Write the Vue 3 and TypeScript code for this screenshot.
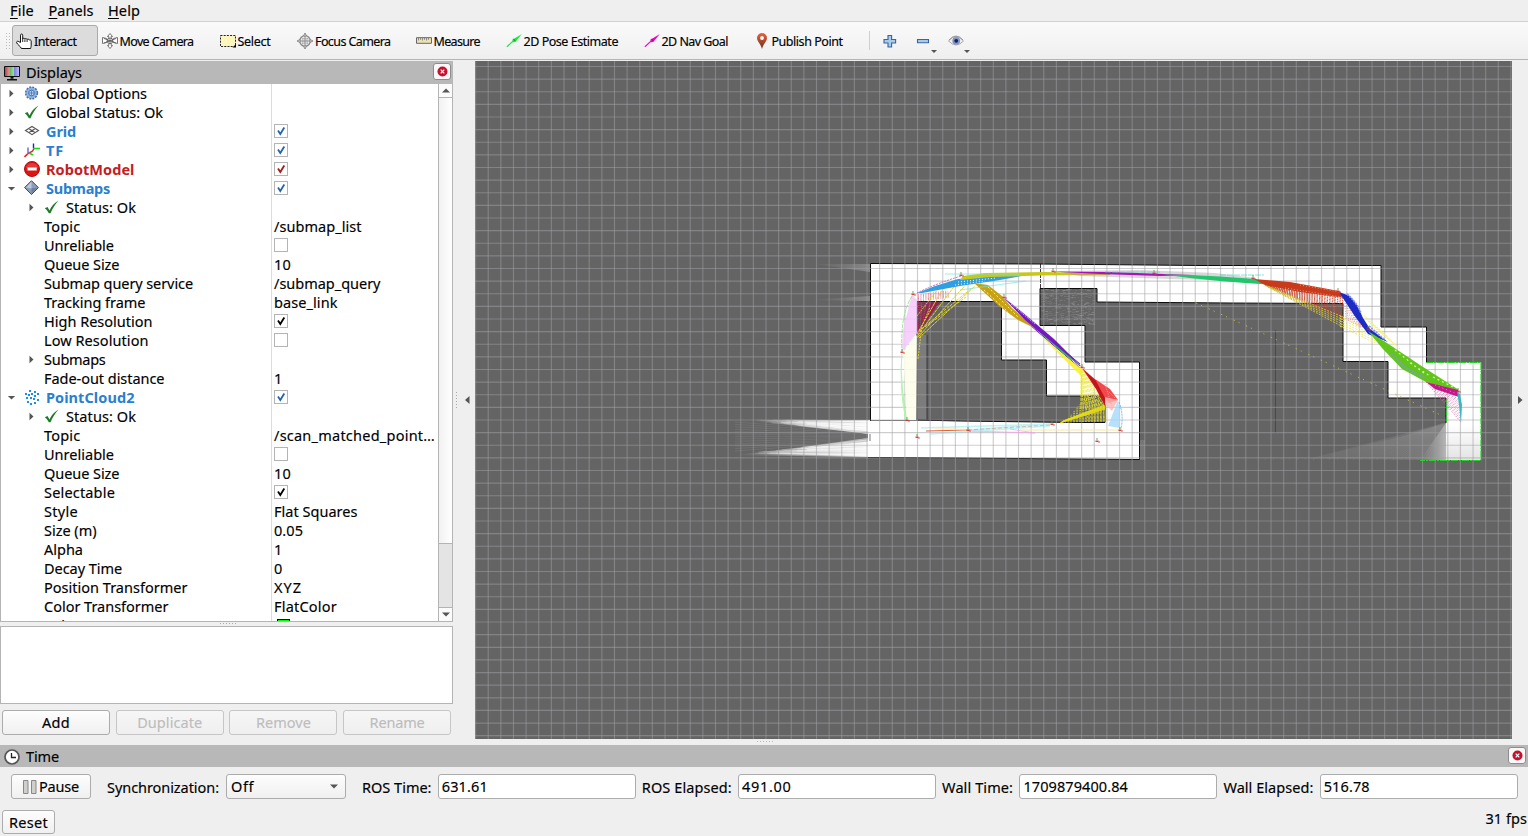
<script setup lang="ts">
import type { Directive } from 'vue'

/** Spreads a label's letters so that it takes the given advance width. */
const fit = (el: HTMLElement, width?: number) => {
  if (!width) return
  el.style.letterSpacing = '0px'
  const n = (el.textContent ?? '').trim().length
  const natural = el.getBoundingClientRect().width
  el.style.letterSpacing = `${(width - natural) / n}px`
}
const vFit: Directive<HTMLElement, number | undefined> = {
  mounted: (el, binding) => fit(el, binding.value),
}

const icons: Record<string, string> = {
  hand: '<path d="M4.500 9.500V2.200c0-1.600 2.200-1.600 2.200 0V6c.3-1 2-1 2.200.2.4-.9 2-.7 2.200.4.4-.8 1.900-.6 2.100.5.7-.6 2-.2 2 1v4.100c0 2-.6 2.600-.6 3.300H5.400C5 13.500 1 11.500.6 9.500c-.2-1.200 1.300-1.700 2.200-.9z" fill="#fff" stroke="#111" stroke-width="1"/><path d="M6.700 6v3M8.900 6.500v2.500M11.100 6.800V9" stroke="#111" stroke-width=".9"/>',
  move: '<g fill="#fff" stroke="#666" stroke-width=".9"><path d="M8 .5l2.500 3H9.200v2.300H6.800V3.500H5.500zM8 15.500l2.500-3H9.200v-2.300H6.800v2.300H5.500zM.5 4.500l4 1 1 2-1 2-4 1zM15.500 4.500l-4 1-1 2 1 2 4 1z"/><circle cx="8" cy="7.800" r="2.800"/></g><path d="M2 5.500l12 4.500M2 10l12-4.500M8 5v6M5 8h6" stroke="#555" stroke-width=".8"/>',
  select: '<path d="M.5 2.500h15v11H.5z" fill="#fff6bd" stroke="#222" stroke-dasharray="2 1.200"/><path d="M16 11v3.500h-3.500z" fill="#000"/>',
  focus: '<g fill="none" stroke="#888"><circle cx="8" cy="8" r="5.300" stroke-width="1.300"/><path d="M8 0l1.500 3h-3zM8 16l1.500-3h-3zM0 8l3-1.500v3zM16 8l-3-1.500v3z" fill="#eee"/><path d="M8 3v10M3 8h10" stroke-width="1"/><path d="M5.800 4.500v7M10.200 4.500v7M4.500 5.800h7M4.500 10.200h7" stroke-width=".5"/></g>',
  measure: '<path d="M.5 4.700h15v5.600H.5z" fill="#eee3b0" stroke="#666"/><path d="M2.500 5v2.500M4.500 5v1.800M6.500 5v2.500M8.500 5v1.800M10.500 5v2.500M12.500 5v1.800" stroke="#777" stroke-width=".8"/>',
  pose: '<path d="M.3 13.500l6-5.500.2-1.500 1.500-.8L15.800 1l-5.500 6.800-1.500 1.200-2.200.2-5 4.800z" fill="#0cf033"/><path d="M7.500 5.800l2 2.600" stroke="#078c20"/>',
  goal: '<path d="M.3 13.500l6-5.500.2-1.500 1.500-.8L15.800 1l-5.500 6.800-1.500 1.200-2.200.2-5 4.800z" fill="#f000cc"/><path d="M7.500 5.800l2 2.600" stroke="#90107c"/>',
  pin: '<defs><linearGradient id="pinfill" x2="0" y2="1"><stop stop-color="#f0603c"/><stop offset="1" stop-color="#64321e"/></linearGradient></defs><path d="M8 16C7 11 3 8.500 3 5a5 5 0 0110 0c0 3.500-4 6-5 11z" fill="url(#pinfill)"/><circle cx="8" cy="5" r="1.900" fill="#fff"/>',
  plus: '<path d="M6 2.500h3.600v4h4V10h-4v4H6v-4H2V6.500h4z" fill="#a9cbea" stroke="#3565a5" stroke-width="1.100"/>',
  minus: '<path d="M2.500 6.500h11v3.200h-11z" fill="#a9cbea" stroke="#3565a5" stroke-width="1.100"/>',
  eye: '<path d="M.5 8Q8-1 15.500 8 8 16 .5 8z" fill="#eee" stroke="#aaa"/><circle cx="8.200" cy="7.800" r="3.900" fill="#8095c8"/><circle cx="8.200" cy="7.800" r="1.900" fill="#18204c"/><path d="M1 7Q8-1 15 7" fill="none" stroke="#999"/>',
  monitor: '<defs><linearGradient id="crt"><stop stop-color="#b03c3c"/><stop offset=".33" stop-color="#e09c9c"/><stop offset=".34" stop-color="#58b858"/><stop offset=".65" stop-color="#a4e4a4"/><stop offset=".66" stop-color="#8080e0"/><stop offset="1" stop-color="#c0c0f8"/></linearGradient></defs><path d="M.5 1.500h15v10H.5z" fill="url(#crt)" stroke="#111"/><path d="M6.500 12h3v1.700h-3zM3 14h10v1.500H3z" fill="#111"/>',
  gear: '<circle cx="7.500" cy="8" r="5.800" fill="#8fb2df" stroke="#4474b8" stroke-width="1.700" stroke-dasharray="2 1.040"/><circle cx="7.500" cy="8" r="5" fill="#8fb2df"/><circle cx="7.500" cy="8" r="2.900" fill="#c0d5ee" stroke="#4474b8"/><path d="M7.500 5.500v5M5 8h5" stroke="#4474b8" stroke-width=".8"/>',
  check: '<path d="M.8 9.200l2.700-1.200 2 3.400C7.200 7.800 10.500 3.800 14.500 1.600 11 5.500 8.300 10 6.500 14.200H4.800C3.800 12 2.500 10.400.8 9.200z" fill="#207a28"/>',
  grid: '<g fill="none" stroke="#555" stroke-width="1.100"><path d="M1.500 7.500L8 3.500l6.500 4L8 11.700zM4.700 5.500l6.600 4.200M11.300 5.500L4.700 9.700"/></g>',
  tf: '<g fill="none" stroke-width="1.400"><path d="M10 7l-2 2.500-4 2" stroke="#e22"/><path d="M4 11.500L.5 15" stroke="#e22" stroke-width="1.700"/><path d="M9.500 6.500v-5" stroke="#22d"/><path d="M4 11V5.500" stroke="#66c"/><path d="M10 6.500h6M5 11l4 2" stroke="#1d1"/></g>',
  error: '<circle cx="8" cy="8" r="7.500" fill="#dc1414" stroke="#b40c0c"/><path d="M2 7a6 5 0 0112 0z" fill="#ee5a5a" opacity=".5"/><path d="M3.500 6.500h9.200v3H3.500z" fill="#fff"/>',
  diamond: '<path d="M7.500.7l6.900 6.900-6.900 6.900L.6 7.600z" fill="#8c9cba" stroke="#3c4860"/><path d="M7.500 1.500L2 7.500l5.500 1z" fill="#bcc8dc"/><path d="M7.500 8.500l6-1-6 6z" fill="#6d7d9e"/>',
  cloud: '<g fill="#1d8cf0"><path d="M5 1h2v2H5zM10 2h2v2h-2zM1 4h2v2H1zM4 5h2v2H4zM7 4h2v2H7zM13 4h2v2h-2zM10 6h2v2h-2zM2 8h2v2H2zM6 8h2v2H6zM9 9h2v2H9zM13 10h2v2h-2zM3 12h2v2H3zM10 13h2v2h-2zM6 14h2v2H6z"/></g>',
  clock: '<circle cx="8" cy="8" r="7" fill="#fff" stroke="#555" stroke-width="1.700"/><path d="M7.500 4v4.500H12" fill="none" stroke="#222" stroke-width="1.300"/>',
}

const menus = [
  { key: 'F', rest: 'ile', w: 24 },
  { key: 'P', rest: 'anels', w: 45 },
  { key: 'H', rest: 'elp', w: 32 },
]

interface Tool { icon: string; label: string; w: number; box: number; on?: boolean }
const tools: Tool[] = [
  { icon: 'hand', label: 'Interact', w: 42.5, box: 86, on: true },
  { icon: 'move', label: 'Move Camera', w: 74, box: 118 },
  { icon: 'select', label: 'Select', w: 33, box: 77.5 },
  { icon: 'focus', label: 'Focus Camera', w: 75.5, box: 118.500 },
  { icon: 'measure', label: 'Measure', w: 46.5, box: 90 },
  { icon: 'pose', label: '2D Pose Estimate', w: 94.5, box: 138 },
  { icon: 'goal', label: '2D Nav Goal', w: 66.5, box: 110 },
  { icon: 'pin', label: 'Publish Point', w: 71, box: 119 },
]

interface Row {
  t: string; w: number; arrow?: 'r' | 'd'; depth?: number; icon?: string; tone?: string
  v?: string; vw?: number; box?: 'blue' | 'red' | 'black' | 'none'
}
const rows: Row[] = [
  { t: 'Global Options', w: 101, arrow: 'r', icon: 'gear' },
  { t: 'Global Status: Ok', w: 117, arrow: 'r', icon: 'check' },
  { t: 'Grid', w: 30, arrow: 'r', icon: 'grid', tone: 'blue', box: 'blue' },
  { t: 'TF', w: 18, arrow: 'r', icon: 'tf', tone: 'blue', box: 'blue' },
  { t: 'RobotModel', w: 88.5, arrow: 'r', icon: 'error', tone: 'red', box: 'red' },
  { t: 'Submaps', w: 64, arrow: 'd', icon: 'diamond', tone: 'blue', box: 'blue' },
  { t: 'Status: Ok', w: 70, arrow: 'r', depth: 1, icon: 'check' },
  { t: 'Topic', w: 36.5, depth: 1, v: '/submap_list', vw: 87.5 },
  { t: 'Unreliable', w: 70, depth: 1, box: 'none' },
  { t: 'Queue Size', w: 75.5, depth: 1, v: '10', vw: 17 },
  { t: 'Submap query service', w: 149, depth: 1, v: '/submap_query', vw: 106.5 },
  { t: 'Tracking frame', w: 101.5, depth: 1, v: 'base_link', vw: 63.5 },
  { t: 'High Resolution', w: 108.5, depth: 1, box: 'black' },
  { t: 'Low Resolution', w: 104.5, depth: 1, box: 'none' },
  { t: 'Submaps', w: 61.5, depth: 1, arrow: 'r' },
  { t: 'Fade-out distance', w: 120.5, depth: 1, v: '1', vw: 8 },
  { t: 'PointCloud2', w: 88.5, arrow: 'd', icon: 'cloud', tone: 'blue', box: 'blue' },
  { t: 'Status: Ok', w: 70, arrow: 'r', depth: 1, icon: 'check' },
  { t: 'Topic', w: 36.5, depth: 1, v: '/scan_matched_point…', vw: 161 },
  { t: 'Unreliable', w: 70, depth: 1, box: 'none' },
  { t: 'Queue Size', w: 75.5, depth: 1, v: '10', vw: 17 },
  { t: 'Selectable', w: 71, depth: 1, box: 'black' },
  { t: 'Style', w: 34, depth: 1, v: 'Flat Squares', vw: 83.5 },
  { t: 'Size (m)', w: 52.5, depth: 1, v: '0.05', vw: 29 },
  { t: 'Alpha', w: 39, depth: 1, v: '1', vw: 8 },
  { t: 'Decay Time', w: 78, depth: 1, v: '0', vw: 8 },
  { t: 'Position Transformer', w: 143.5, depth: 1, v: 'XYZ', vw: 28 },
  { t: 'Color Transformer', w: 124.5, depth: 1, v: 'FlatColor', vw: 63 },
]

const actions = [
  { t: 'Add', w: 28, on: true },
  { t: 'Duplicate', w: 65 },
  { t: 'Remove', w: 55 },
  { t: 'Rename', w: 55 },
]

const clocks = [
  { label: 'ROS Time:', lw: 69.500, value: '631.61', vw: 46 },
  { label: 'ROS Elapsed:', lw: 90, value: '491.00', vw: 49.5 },
  { label: 'Wall Time:', lw: 71, value: '1709879400.84', vw: 104.5 },
  { label: 'Wall Elapsed:', lw: 90, value: '516.78', vw: 46 },
]

// ---- 3D viewport ----
const pitch = 12.626
const vLines = Array.from({ length: 83 }, (_, i) => +(475.6 + i * pitch).toFixed(2))
const hLines = Array.from({ length: 54 }, (_, i) => +(66.5 + i * pitch).toFixed(2))

let seed = 7
const rnd = () => {
  seed = (seed * 16807) % 2147483647
  return seed / 2147483647
}

/** Lines from points between (a,b) to points between (c,d). */
const sweep = (p: number[], n: number) => {
  let d = ''
  for (let i = 0; i <= n; i++) {
    const k = i / n
    const x1 = p[0] + (p[2] - p[0]) * k
    const y1 = p[1] + (p[3] - p[1]) * k
    const x2 = p[4] + (p[6] - p[4]) * k
    const y2 = p[5] + (p[7] - p[5]) * k
    d += `M${x1.toFixed(1)} ${y1.toFixed(1)}L${x2.toFixed(1)} ${y2.toFixed(1)}`
  }
  return d
}

interface Sweep { d: string; c: string; w?: number; dash?: string; o?: number }
const sweeps: Sweep[] = [
  { d: sweep([918, 302, 918, 334, 940, 302, 936, 306], 14), c: '#a01848', w: 1.2, dash: '3 1.2', o: 0.9 },
  { d: sweep([918, 295, 918, 301, 948, 291, 950, 297], 5), c: '#e06080', w: 1, dash: '1 1.5', o: 0.8 },
  { d: sweep([917, 334, 919, 338, 945, 285, 975, 286], 3), c: '#e0d428', w: 1, dash: '3 .6' },
  { d: sweep([917, 316, 918, 359, 938, 289, 922, 325], 2), c: '#d8cc30', w: 1, dash: '2 1' },
  { d: 'M919 331L972 288M925 327L966 297', c: '#e0d428', w: 1, dash: '3 1' },
  { d: sweep([1083, 370, 1081, 370, 1104, 404, 1081, 410], 10), c: '#f0ec40', w: 1, dash: '3 1', o: 0.85 },
  { d: sweep([1105, 404, 1105, 421, 1086, 396, 1065, 422], 15), c: '#e8e020', w: 0.9, dash: '2 1', o: 0.75 },
  { d: sweep([1105, 405, 1105, 409, 1063, 421, 1060, 423], 4), c: '#e8e010', w: 1 },
  { d: sweep([1085, 396, 1102, 396, 1088, 421, 1104, 421], 5), c: '#d8d024', w: 0.8, dash: '2 2' },
  { d: sweep([1265, 285, 1268, 286, 1343, 297, 1343, 319], 12), c: '#c44028', w: 1, dash: '1.5 1.1', o: 0.85 },
  { d: sweep([1343, 298, 1343, 317, 1364, 327, 1360, 327], 7), c: '#d88078', w: 1, dash: '1 2' },
  { d: sweep([1265, 285, 1268, 287, 1343, 317, 1343, 327], 4), c: '#d0c030', w: 1, dash: '2 1.2' },
  { d: sweep([1340, 316, 1340, 326, 1375, 334, 1375, 343], 4), c: '#f0ec70', w: 1, dash: '2 1.4' },
  { d: sweep([1361, 313, 1371, 325, 1388, 337, 1400, 349], 3), c: '#f8f45c', w: 1, dash: '2 1' },
  { d: sweep([1426, 382, 1448, 391, 1461, 422, 1461, 402], 8), c: '#d070a8', w: 0.8, dash: '1.5 1.5' },
  { d: sweep([1030, 322, 1030, 325, 1080, 364, 1080, 368], 2), c: '#7418bc', w: 1 },
]

interface Ribbon { p: string; f: string; o?: number }
const ribbons: Ribbon[] = [
  { p: '912,294 917,300 917,333 902,352 903,330', f: '#f7c8fb' },
  { p: '903,352 917,335 916,420 907,420', f: '#fefeea' },
  { p: '901,358 903,390 907,420 905,420 902,395', f: '#a4f0a0' },
  { p: '917,293 935,286 958,279 990,276 1032,274 1000,280 960,286 922,293', f: '#2e9fe0' },
  { p: '963,276 985,273 1045,272 1110,273 1110,275 1040,275.500 990,277 960,280', f: '#c8c81c' },
  { p: '1055,271 1140,270 1215,273 1256,278 1250,281 1170,279 1080,276', f: '#8f8f8f', o: 0.35 },
  { p: '1051,271.500 1110,272 1164,274 1193,275 1160,276 1100,274', f: '#b010b8' },
  { p: '1163,274.500 1190,275 1220,276.500 1255,279 1268,284.500 1245,283 1220,281 1190,278', f: '#22c46c' },
  { p: '1254,279 1290,282 1339,291 1345,298 1300,292 1265,285', f: '#c83a1a' },
  { p: '1339,292 1350,296 1357,305 1363,318 1370,329 1388,342 1368,334 1354,315', f: '#1c2dc6' },
  { p: '1368,331 1390,345 1420,365 1459,390 1456,391 1426,382 1402,369 1382,348', f: '#61c51b' },
  { p: '1426,382 1458,390 1459,397 1435,389', f: '#c5168b' },
  { p: '1457,391 1460,394 1462,405 1461,423 1459,405', f: '#38b8c0' },
  { p: '974,283 988,285 1002,296 1012,308 1038,330 1018,320 999,306', f: '#c7a313' },
  { p: '1003,297 1022,312 1054,339 1082,367 1050,341 1025,320', f: '#7319bf' },
  { p: '1037,330 1054,344 1082,367 1065,355', f: '#20c052' },
  { p: '1038,333 1060,352 1082,369 1082,377', f: '#f8f020', o: 0.85 },
  { p: '1082,368 1098,382 1105,391 1105,406 1096,389', f: '#c4161a' },
  { p: '1095,379 1110,389 1118,400 1109,403 1105,398', f: '#f04a4e' },
  { p: '1105,397 1118,400 1112,411 1105,404', f: '#fbb4b4', o: 0.8 },
  { p: '1118,400 1120,412 1120,428 1108,426', f: '#a5d8fa', o: 0.8 },
]

const leftFan = (() => {
  let d = ''
  for (let i = 0; i < 46; i++) {
    const k = rnd()
    d += `M871 ${(421 + k * 14).toFixed(1)}L${(745 + k * 55 + rnd() * 45).toFixed(1)} ${(420 + k * 6).toFixed(1)}`
    d += `M871 ${(438 + k * 19).toFixed(1)}L${(800 - k * 60 + rnd() * 35).toFixed(1)} ${(447 + k * 7).toFixed(1)}`
  }
  return d
})()
const darkFan = sweep([871, 432, 871, 441, 735, 422, 735, 451], 12)
const rightFan = (() => {
  let d = ''
  for (let i = 0; i < 44; i++) d += `M1446 423L${(1310 + i * 3.3).toFixed(1)} 459`
  return d
})()
const noise = Array.from({ length: 520 }, () => ({
  x: Math.round(1041 + rnd() * 52), y: Math.round(289 + rnd() * 35), w: 1 + Math.round(rnd() * 3), o: +(rnd() * 0.13).toFixed(2),
}))
const frames = [
  [913, 294], [902, 352], [907, 420], [917, 437], [961, 275], [968, 430], [1053, 271], [1052, 424], [1097, 441],
  [1120, 430], [1154, 273], [1253, 278], [1338, 291], [1368, 329], [1458, 391], [1082, 367], [1004, 297],
]
const hole = 'M917 301.500H1001.500V360H1046.500V396H1105V422.500H1075L960 421L917 420Z'
const region =
  'M870.500 263.500L1040 264L1200 265.500H1381V327H1426.500V362.500H1481V460H1446V398H1388V361.500H1343V303.500L1230 303L1097 302V288.500H1040V325.500H1085V362H1139.500V459.500L960 458L868 457V420H870.500Z'
</script>

<template>
  <div class="window">
    <nav class="menubar">
      <span v-for="m in menus" :key="m.key" v-fit="m.w" class="menu"><u>{{ m.key }}</u>{{ m.rest }}</span>
    </nav>
    <div class="toolbar">
      <i class="grip"></i>
      <div v-for="t in tools" :key="t.label" class="tool" :class="{ on: t.on }" :style="{ width: t.box + 'px' }">
        <svg width="16" height="16" viewBox="0 0 16 16" v-html="icons[t.icon]"></svg>
        <span v-fit="t.w">{{ t.label }}</span>
      </div>
      <i class="sep"></i>
      <svg class="mini" width="16" height="16" viewBox="0 0 16 16" v-html="icons.plus"></svg>
      <svg class="mini drop" width="25" height="24" viewBox="0 0 25 24">
        <g transform="translate(0 4)" v-html="icons.minus"></g><path d="M16 21h6l-3 3z" fill="#555" />
      </svg>
      <svg class="mini drop" width="25" height="24" viewBox="0 0 25 24">
        <g transform="translate(0 4)" v-html="icons.eye"></g><path d="M16 21h6l-3 3z" fill="#555" />
      </svg>
    </div>

    <main class="middle">
      <aside class="displays">
        <header class="dock">
          <svg width="16" height="16" viewBox="0 0 16 16" v-html="icons.monitor"></svg>
          <span v-fit="56">Displays</span>
          <button class="close"><svg width="11" height="11" viewBox="0 0 11 11"><circle cx="5.500" cy="5.500" r="5" fill="#c8102e" /><path d="M3.700 3.700l3.600 3.600M7.300 3.700L3.700 7.300" stroke="#fff" stroke-width="1.200" /></svg></button>
        </header>
        <div class="treebox">
          <div class="tree">
            <div v-for="(r, i) in rows" :key="i" class="row">
              <div class="name" :class="{ child: r.depth }">
                <span class="arrow"><svg v-if="r.arrow" width="9" height="9" viewBox="0 0 9 9"><path :d="r.arrow === 'r' ? 'M2.500 .8L6.500 4.500L2.500 8.200Z' : 'M.8 3L8.200 3L4.500 6.500Z'" fill="#555" /></svg></span>
                <svg v-if="r.icon" class="ico" width="16" height="16" viewBox="0 0 16 16" v-html="icons[r.icon]"></svg>
                <span v-fit="r.w" class="txt" :class="[r.tone, { plain: !r.icon }]">{{ r.t }}</span>
              </div>
              <div class="value">
                <span v-if="r.v" v-fit="r.vw" class="txt">{{ r.v }}</span>
                <span v-if="r.box" class="box" :class="r.box"><svg v-if="r.box !== 'none'" width="12" height="12" viewBox="0 0 12 12"><path d="M3 5.500L5.300 9L9.300 2.500" fill="none" stroke="currentColor" stroke-width="1.800" /></svg></span>
              </div>
            </div>
            <div class="row">
              <div class="name child"><span class="arrow"></span><span v-fit="35" class="txt plain">Color</span></div>
              <div class="value"><i class="swatch"></i></div>
            </div>
          </div>
          <div class="scroll">
            <b class="cap"><svg width="8" height="5" viewBox="0 0 8 5"><path d="M0 4.500L4 .5L8 4.500Z" fill="#555" /></svg></b>
            <b class="thumb"></b>
            <b class="track"></b>
            <b class="cap low"><svg width="8" height="5" viewBox="0 0 8 5"><path d="M0 .5H8L4 4.500Z" fill="#555" /></svg></b>
          </div>
        </div>
        <div class="hgrip"><i></i></div>
        <div class="help"></div>
        <div class="actions">
          <button v-for="a in actions" :key="a.t" :class="{ off: !a.on }"><span v-fit="a.w">{{ a.t }}</span></button>
        </div>
      </aside>

      <div class="gutter">
        <i class="dots"></i>
        <svg width="5" height="8" viewBox="0 0 5 8"><path d="M4.500 0V8L0 4Z" fill="#555" /></svg>
      </div>

      <svg class="view" width="1037" height="678" viewBox="475 61 1037 678">
        <defs>
          <linearGradient id="lf"><stop stop-color="#fff" stop-opacity="0" /><stop offset=".5" stop-color="#fff" stop-opacity=".35" /><stop offset="1" stop-color="#fff" stop-opacity=".95" /></linearGradient>
          <linearGradient id="rf"><stop stop-color="#999" stop-opacity="0" /><stop offset="1" stop-color="#ccc" stop-opacity=".75" /></linearGradient>
          <linearGradient id="rg" x2="0" y2="1"><stop stop-color="#bbb" stop-opacity="0" /><stop offset="1" stop-color="#bbb" stop-opacity=".4" /></linearGradient>
          <linearGradient id="beam" gradientUnits="userSpaceOnUse" x1="740" x2="870"><stop stop-color="#fff" stop-opacity=".12" /><stop offset="1" stop-color="#fff" stop-opacity=".5" /></linearGradient>
        </defs>
        <rect x="475" y="61" width="1037" height="678" fill="#646464" />
        <path d="M750 421L871 420V434Z" fill="url(#lf)" />
        <path d="M735 455L871 439V457Z" fill="url(#lf)" />
        <path :d="leftFan" stroke="url(#beam)" stroke-width=".7" fill="none" />
        <path :d="darkFan" stroke="#8c8c8c" stroke-width=".6" opacity=".5" />
        <path d="M815 264L870 264V272ZM808 300L870 296V301Z" fill="url(#lf)" opacity=".25" />
        <path d="M1310 459L1400 437L1446 423V460Z" fill="url(#rf)" opacity=".35" />
        <path d="M1420 460L1446 423V460Z" fill="url(#rf)" />
        <path :d="rightFan" stroke="#aaa" stroke-width=".6" opacity=".22" />
        <path :d="region" fill="#fff" />
        <path :d="hole" fill="#646464" />
        <rect x="1446" y="425" width="35" height="35" fill="url(#rg)" />
        <rect x="917" y="335" width="10" height="85" fill="#7c7c7c" />
        <path d="M1139 440h6v20h-6z" fill="#777" />
        <rect v-for="(q, i) in noise" :key="i" :x="q.x" :y="q.y" :width="q.w" height="1" fill="#eee" :opacity="q.o" />
        <g fill="none" stroke="#0c0c0c" stroke-width="1">
          <path d="M870.500 421V263.500L1040 264L1200 265.500H1381V327H1426.500V362.500M1446 423V398H1388V361.500H1343V303.500L1230 303L1097 302V288.500H1040V325.500H1085V362H1139.500V459.500L960 458L868 457.500" />
          <path :d="hole" /><path d="M870 420.500H960M927 335V420M870 434V441" stroke-width=".8" opacity=".7" />
          <path d="M1040.500 264V288" stroke-dasharray="4 1" opacity=".8" /><path d="M1275.500 330V433" opacity=".3" />
        </g>
        <g stroke="#a0a0a4" stroke-opacity=".52" stroke-width="1.150">
          <path v-for="x in vLines" :key="'v' + x" :d="`M${x} 61V739`" />
          <path v-for="y in hLines" :key="'h' + y" :d="`M475 ${y}H1512`" />
        </g>
        <path d="M1196 303L1227 317L1445 417" fill="none" stroke="#b8b44c" stroke-dasharray="1.500 4 1.200 7" />
        <g fill="none" stroke="#20d820" stroke-width="1.200">
          <path d="M1426 362.500H1481V460.500H1420" stroke-dasharray="7 1 2 1" /><path d="M1446.500 399V423" stroke-dasharray="4 2" /><path d="M1265 459H1420" stroke-dasharray="1 7" opacity=".6" />
        </g>
        <polygon v-for="(r, i) in ribbons.slice(0, 3)" :key="'p' + i" :points="r.p" :fill="r.f" opacity=".85" />
        <path v-for="(s, i) in sweeps" :key="'s' + i" :d="s.d" :stroke="s.c" :stroke-width="s.w" :stroke-dasharray="s.dash" :opacity="s.o" />
        <polygon v-for="(r, i) in ribbons.slice(3)" :key="'r' + i" :points="r.p" :fill="r.f" :opacity="r.o" />
        <g fill="none">
          <path d="M917 293Q935 284 961 276" stroke="#c868b8" stroke-dasharray="2 1" />
          <path d="M945 274H1020M960 290L1026 281" stroke="#6ce8e0" opacity=".7" />
          <path d="M958 282L996 278M955 285L985 281" stroke="#fff" stroke-dasharray="1 2" />
          <path d="M988 287L1018 317M984 290L1008 312" stroke="#f5e9b0" stroke-dasharray="2 2" />
          <path d="M1011 304L1035 324" stroke="#c8a4e8" stroke-dasharray="2 1" />
          <path d="M912 296Q900 315 902 352" stroke="#88e080" stroke-dasharray="4 1" opacity=".8" /><path d="M902 352Q899 390 906 420" stroke="#b8f4b0" />
          <path d="M921 428L1050 424M930 434L1050 426M968 430L1050 424" stroke="#80e8ec" stroke-width="1.500" opacity=".5" />
          <path d="M926 431L968 430" stroke="#e85c38" /><path d="M968 430L1050 425" stroke="#e88878" opacity=".6" stroke-dasharray="4 2" /><path d="M972 431L1035 433L1010 429" stroke="#f4a0ec" opacity=".7" />
          <path d="M935 428L968 430M1020 430L1120 430" stroke="#f8eca0" stroke-width="2" opacity=".5" />
          <path d="M1105 384L1112 406M1109 392L1118 401" stroke="#f8a8a8" stroke-dasharray="1 1.500" /><path d="M1119 402Q1124 415 1121 429" stroke="#6cb8f0" stroke-dasharray="2 1" />
          <path d="M1285 288L1342 297M1300 285L1340 292" stroke="#e89880" stroke-dasharray="1 2" />
          <path d="M1347 294Q1358 304 1361 313M1369 326L1385 340" stroke="#9098e4" stroke-width="1.800" stroke-dasharray="2 1" />
          <path d="M1391 354Q1407 372 1425 377" stroke="#78a898" stroke-width="2.500" stroke-dasharray="2 1" />
          <path d="M1395 350L1425 374M1410 363L1430 376M1433 377L1455 388" stroke="#d9f5a8" stroke-width="1.200" stroke-dasharray="2 3" />
          <path d="M1435 385L1457 394" stroke="#e890c8" stroke-dasharray="1 3" />
          <path d="M1220 275H1264M1105 272H1160" stroke="#50d8c8" opacity=".7" stroke-dasharray="6 1" />
        </g>
        <g v-for="(f, i) in frames" :key="'f' + i" opacity=".85">
          <rect :x="f[0] - 1.500" :y="f[1] - 0.500" width="3" height="1.500" fill="#e02420" />
          <rect :x="f[0] + 1" :y="f[1] + 0.500" width="2" height="1" fill="#d04040" /><rect :x="f[0] - 0.500" :y="f[1] - 3" width="1" height="2" fill="#34a848" />
        </g>
      </svg>
      <div class="gutter right">
        <svg width="5" height="8" viewBox="0 0 5 8"><path d="M0 0V8L4.500 4Z" fill="#555" /></svg>
      </div>
      <i class="vgrip"></i>
    </main>

    <header class="dock time">
      <svg width="16" height="16" viewBox="0 0 16 16" v-html="icons.clock"></svg>
      <span v-fit="33">Time</span>
      <button class="close"><svg width="11" height="11" viewBox="0 0 11 11"><circle cx="5.500" cy="5.500" r="5" fill="#c8102e" /><path d="M3.700 3.700l3.600 3.600M7.300 3.700L3.700 7.300" stroke="#fff" stroke-width="1.200" /></svg></button>
    </header>
    <div class="clockrow">
      <button class="pause">
        <svg width="14" height="14" viewBox="0 0 14 14"><path d="M.5.5h4.500v13H.5zM8.500.5h4.500v13H8.500z" fill="#cfcfcb" stroke="#888" /></svg>
        <span v-fit="40">Pause</span>
      </button>
      <label class="sync"><span v-fit="112">Synchronization:</span></label>
      <div class="combo"><span v-fit="23">Off</span><svg width="8" height="5" viewBox="0 0 8 5"><path d="M0 .5H8L4 4.500Z" fill="#555" /></svg></div>
      <template v-for="c in clocks" :key="c.label">
        <label class="clabel"><span v-fit="c.lw">{{ c.label }}</span></label>
        <div class="field"><span v-fit="c.vw">{{ c.value }}</span></div>
      </template>
    </div>
    <footer class="status">
      <button class="reset"><span v-fit="39">Reset</span></button>
      <span class="fps"><span v-fit="41.5">31 fps</span></span>
    </footer>
  </div>
</template>

<style>
body { margin: 0; background: #efefef; overflow: hidden; }
</style>

<style scoped>
.window { width: 1528px; height: 836px; display: flex; flex-direction: column; background: #efefef; color: #000; font: 14.5px/19px "Noto Sans", "Open Sans", sans-serif; -webkit-text-stroke: 0.15px currentColor; overflow: hidden; white-space: nowrap; }
.window * { box-sizing: border-box; }
.window svg { flex: none; display: block; }
button { font: inherit; color: inherit; padding: 0; margin: 0; }
span { flex: none; display: inline-block; }
i { display: block; flex: none; }
u { text-underline-offset: 2px; text-decoration-thickness: 1px; }

.menubar { height: 22px; flex: none; display: flex; gap: 14.5px; padding: 1px 0 0 10px; border-bottom: 1px solid #d2d2d2; }
.menubar .menu { height: 19px; }
.toolbar { height: 38px; flex: none; display: flex; align-items: center; padding-left: 5px; background: linear-gradient(#fafafa, #efefef); border-bottom: 1px solid #b4b4b4; font-size: 12.5px; }
.grip { width: 5px; height: 17px; margin-right: 2px; background: radial-gradient(circle, #bbb 0.7px, transparent 0.9px) 0 0 / 3px 3px; }
.tool { height: 31px; flex: none; display: flex; align-items: center; gap: 2px; padding-left: 3.5px; }
.tool span { padding-top: 2px; }
.tool svg { margin-top: 1px; }
.tool.on { background: #dcdcdc; border: 1px solid #aaa; border-radius: 3px; padding-left: 3px; }
.sep { width: 1px; height: 19px; background: #cfcfcf; margin-right: 12px; }
.mini { margin: 1px 17px 0 0; }
.mini.drop { margin-right: 8px; }

.middle { position: relative; height: 684px; margin-top: 1px; flex: none; display: flex; }
.displays { width: 453px; flex: none; display: flex; flex-direction: column; }
.dock { height: 23px; flex: none; display: flex; align-items: center; gap: 6px; padding: 0 2px 0 4px; background: #b8b8b8; }
.close { margin-left: auto; width: 18px; height: 17px; display: flex; align-items: center; justify-content: center; background: #f8f8f8; border: 1px solid #8d8d8d; border-radius: 3px; position: relative; top: -1px; }
.treebox { height: 538px; flex: none; display: flex; background: #fff; border: 1px solid #b4b4b4; border-top: 0; overflow: hidden; }
.tree { width: 437px; flex: none; overflow: hidden; }
.row { height: 19px; display: flex; }
.name { width: 271px; flex: none; display: flex; align-items: center; border-right: 1px solid #dcdcdc; }
.arrow { width: 9px; margin: 0 7.5px 0 5.5px; }
.name.child .arrow { margin-left: 25.5px; }
.name .ico { margin: -2px 6px 0 1px; }
.txt { height: 19px; line-height: 18px; }
.plain { margin-left: 1px; }
.txt.blue { color: #2a7fcf; font-weight: 700; -webkit-text-stroke: 0; }
.txt.red { color: #c4201e; font-weight: 700; -webkit-text-stroke: 0; }
.value { display: flex; align-items: center; padding-left: 2px; }
.box { width: 14px; height: 14px; margin-bottom: 2px; border: 1px solid #b4b4b4; background: #fff; }
.box.blue { color: #2366a8; }
.box.red { color: #a01c1c; }
.box.black { color: #000; }
.swatch { width: 13px; height: 13px; margin: 3px 0 0 3px; align-self: flex-start; background: #0f0; border: 1px solid #000; }
.scroll { width: 14px; flex: none; display: flex; flex-direction: column; border-left: 1px solid #b4b4b4; }
.cap { height: 14px; display: flex; align-items: center; justify-content: center; background: #fbfbfb; border-bottom: 1px solid #b4b4b4; }
.cap.low { border: 0; border-top: 1px solid #b4b4b4; }
.thumb { height: 446px; background: linear-gradient(90deg, #f1f1f1, #fff); border-bottom: 1px solid #b4b4b4; }
.track { flex: 1; background: #e4e4e4; }
.hgrip { height: 4px; flex: none; display: flex; justify-content: center; align-items: flex-start; padding-top: 1px; }
.hgrip i { width: 17px; height: 1px; margin-left: 3px; background: repeating-linear-gradient(90deg, #aaa 0 1px, transparent 1px 3px); }
.help { height: 78px; flex: none; background: #fff; border: 1px solid #b4b4b4; }
.actions { display: grid; grid-template-columns: repeat(4, 108px); gap: 5.7px; padding: 6px 0 0 2px; }
.actions button, .pause, .reset, .combo { height: 25px; display: flex; align-items: center; justify-content: center; border: 1px solid #acacac; border-radius: 3px; background: linear-gradient(#fdfdfd, #f0f0f0); }
.actions button.off { color: #bdbdbd; border-color: #c6c6c6; background: linear-gradient(#f6f6f6, #efefef); }

.gutter { width: 22px; flex: none; display: flex; align-items: flex-start; gap: 7.5px; padding: 335px 0 0 3px; }
.gutter.right { width: 16px; padding-left: 6px; }
.dots { width: 1px; height: 17px; margin-top: -4px; background: repeating-linear-gradient(#aaa 0 1px, transparent 1px 3px); }
.vgrip { position: absolute; left: 757px; bottom: 3px; width: 16px; height: 1px; background: repeating-linear-gradient(90deg, #bbb 0 1px, transparent 1px 3px); }

.dock.time { height: 22px; }
.dock.time svg { margin-top: 1px; }
.dock.time .close svg { margin: 0; }
.clockrow { height: 43px; flex: none; display: flex; align-items: flex-start; padding: 7px 0 0 11px; }
.pause { width: 80px; gap: 2px; flex: none; margin-right: 16px; }
.clockrow label { padding-top: 4px; flex: none; display: block; }
.sync { width: 119px; }
.combo { width: 120px; flex: none; justify-content: space-between; padding: 0 7px 0 4px; margin-right: 10px; }
.clabel { padding-left: 6px; }
.clabel span { margin-right: 6.3px; }
.field { width: 198px; height: 25px; flex: none; padding: 2px 0 0 3px; border: 1px solid #acacac; border-radius: 3px; background: #fff; }
.status { display: flex; justify-content: space-between; align-items: flex-start; padding: 0 1px 0 2px; }
.reset { width: 53px; height: 24px; flex: none; }
.fps { line-height: 17px; }
.fps span { line-height: 17px; }
</style>
